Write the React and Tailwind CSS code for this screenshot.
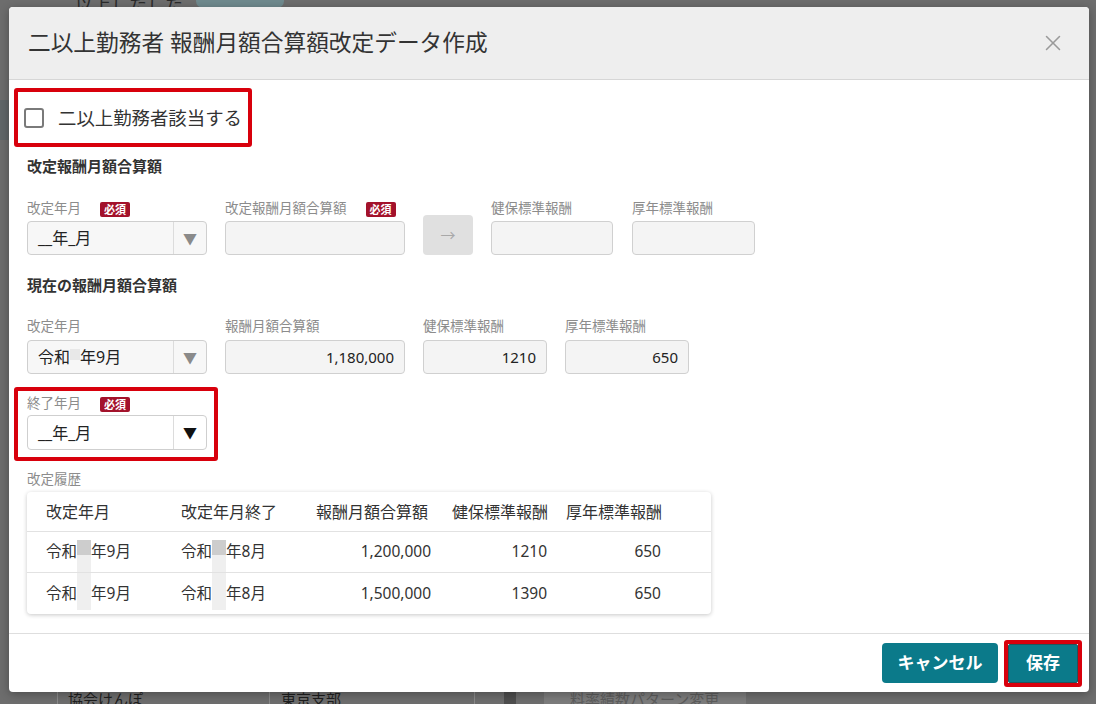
import { X } from 'lucide-react';

function Badge() {
  return (
    <span className="ml-[19px] inline-flex h-[15px] items-center rounded-[2px] bg-[#a3122b] px-[4px] text-[11px] font-bold leading-none text-white">
      必須
    </span>
  );
}

function Label({ children, required }) {
  return (
    <div className="flex h-[18px] items-center text-[13.5px] leading-none text-[#8c8c8c]">
      <span>{children}</span>
      {required && <Badge />}
    </div>
  );
}

function Select({ children, active }) {
  return (
    <div
      className={
        'flex h-[34px] w-[180px] items-center rounded-[4px] border border-[#cfcfcf] ' +
        (active ? 'h-[35px] bg-white' : 'bg-[#f7f7f7]')
      }
    >
      <div className="flex flex-1 items-center pl-[10px] text-[16px] text-[#222]">{children}</div>
      <div className="h-full w-px bg-[#dcdcdc]" />
      <div
        className={
          'flex w-[32px] justify-center text-[14px] ' + (active ? 'text-[#111]' : 'text-[#8a8a8a]')
        }
      >
        ▼
      </div>
    </div>
  );
}

function Field({ w, value }) {
  return (
    <div
      className={
        'flex h-[34px] items-center justify-end rounded-[4px] border border-[#d0d0d0] bg-[#f4f4f4] pr-[10px] text-[15px] text-[#222] ' +
        w
      }
    >
      {value}
    </div>
  );
}

const rows = [
  { from: '9', to: '8', total: '1,200,000', ken: '1210', kou: '650' },
  { from: '9', to: '8', total: '1,500,000', ken: '1390', kou: '650' },
];

function Redact({ first }) {
  if (first) {
    return (
      <span className="flex h-[32px] w-[14px] flex-col self-end">
        <span className="h-[15px] bg-[#cdcdcd]" />
        <span className="flex-1 bg-[#efefef]" />
      </span>
    );
  }
  return <span className="h-[37px] w-[14px] self-start bg-[#efefef]" />;
}

export default function App() {
  return (
    <div className="relative h-[704px] w-[1096px] overflow-hidden bg-[#6d6d6d] font-['Noto_Sans','Noto_Sans_CJK_JP',sans-serif]">
      {/* page behind the overlay */}
      <div className="absolute left-[57px] top-[-9px] text-[18px] text-[#2a2a2a]">二以上したした</div>
      <div className="absolute left-[196px] top-[-6px] h-[14px] w-[88px] rounded-full bg-[#6f8a8e]" />
      <div className="absolute left-0 top-[100px] h-[40px] w-[9px] bg-[#5f6668]" />
      <div className="absolute bottom-0 left-[57px] flex h-[12px] w-[690px] items-end text-[15px] leading-[15px] text-[#1e1e1e]">
        <div className="h-full w-[212px] border-l border-[#8a8a8a] pl-[10px]">協会けんぽ</div>
        <div className="h-full w-[206px] border-l border-r border-[#8a8a8a] pl-[11px]">東京支部</div>
        <div className="ml-[29px] h-full w-[12px] bg-[#4e4e4e]" />
        <div className="ml-[28px] h-full w-[202px] bg-[#7c7c7c] pl-[26px] text-[#5c5c5c]">料率績数パターン変更</div>
      </div>

      {/* modal */}
      <div className="absolute left-[9px] top-[7px] flex h-[685px] w-[1080px] flex-col rounded-[4px] bg-white shadow-[0_2px_10px_rgba(0,0,0,0.3)]">
        <div className="flex h-[73px] items-center justify-between rounded-t-[4px] border-b border-[#d6d6d6] bg-[#eeeeee] pl-[19px] pr-[23px]">
          <h1 className="text-[22.7px] text-[#333]">二以上勤務者 報酬月額合算額改定データ作成</h1>
          <X size={26} strokeWidth={1.4} className="text-[#9a9a9a]" />
        </div>

        <div className="flex-1 px-[18px]">
          <div className="-ml-[13px] mt-[8px] flex h-[59px] w-[238px] items-center rounded-[3px] border-4 border-[#d8000c] pl-[6px]">
            <span className="h-[20px] w-[20px] rounded-[3px] border-2 border-[#7a7a7a]" />
            <span className="ml-[14px] text-[18.4px] text-[#333]">二以上勤務者該当する</span>
          </div>

          <div className="mt-[8px] h-[22px] text-[15px] font-bold leading-[22px] text-[#333]">改定報酬月額合算額</div>

          <div className="mt-[23px] flex items-end gap-[18px]">
            <div>
              <Label required>改定年月</Label>
              <div className="mt-[3px]">
                <Select>__年_月</Select>
              </div>
            </div>
            <div>
              <Label required>改定報酬月額合算額</Label>
              <div className="mt-[3px]">
                <Field w="w-[180px]" value="" />
              </div>
            </div>
            <div className="flex h-[40px] w-[50px] items-center justify-center rounded-[4px] bg-[#e0e0e0] text-[15px] text-[#a8a8a8]">
              →
            </div>
            <div>
              <Label>健保標準報酬</Label>
              <div className="mt-[3px]">
                <Field w="w-[122px]" value="" />
              </div>
            </div>
            <div className="ml-[1px]">
              <Label>厚年標準報酬</Label>
              <div className="mt-[3px]">
                <Field w="w-[123px]" value="" />
              </div>
            </div>
          </div>

          <div className="mt-[19px] h-[22px] text-[15px] font-bold leading-[22px] text-[#333]">現在の報酬月額合算額</div>

          <div className="mt-[22px] flex gap-[18px]">
            <div>
              <Label>改定年月</Label>
              <div className="mt-[4px]">
                <Select>
                  <span>令和</span>
                  <span className="mb-[6px] h-[11px] w-[10px] bg-[#e8e8e8]" />
                  <span>年9月</span>
                </Select>
              </div>
            </div>
            <div>
              <Label>報酬月額合算額</Label>
              <div className="mt-[4px]">
                <Field w="w-[180px]" value="1,180,000" />
              </div>
            </div>
            <div>
              <Label>健保標準報酬</Label>
              <div className="mt-[4px]">
                <Field w="w-[124px]" value="1210" />
              </div>
            </div>
            <div>
              <Label>厚年標準報酬</Label>
              <div className="mt-[4px]">
                <Field w="w-[124px]" value="650" />
              </div>
            </div>
          </div>

          <div className="-ml-[13px] mt-[13px] h-[74px] w-[204px] rounded-[3px] border-4 border-[#d8000c] pl-[9px] pt-[4px]">
            <Label required>終了年月</Label>
            <div className="mt-[2px]">
              <Select active>__年_月</Select>
            </div>
          </div>

          <div className="mt-[10px]">
            <Label>改定履歴</Label>
          </div>

          <div className="mt-[3px] w-[684px] rounded-[4px] bg-white text-[15.5px] text-[#333] shadow-[0_1px_4px_rgba(0,0,0,0.22)]">
            <div className="flex h-[40px] items-center border-b border-[#e2e2e2] pl-[19px] text-[16px]">
              <div className="w-[135px]">改定年月</div>
              <div className="w-[135px]">改定年月終了</div>
              <div className="w-[115px]">報酬月額合算額</div>
              <div className="ml-[21px] w-[95px] whitespace-nowrap">健保標準報酬</div>
              <div className="ml-[19px] w-[95px] whitespace-nowrap">厚年標準報酬</div>
            </div>
            {rows.map((r, i) => (
              <div
                key={i}
                className={
                  'flex h-[41px] items-center pl-[19px] ' + (i === 0 ? 'border-b border-[#e2e2e2]' : '')
                }
              >
                <div className="flex h-full w-[135px] items-center">
                  <span>令和</span>
                  <Redact first={i === 0} />
                  <span>年{r.from}月</span>
                </div>
                <div className="flex h-full w-[135px] items-center">
                  <span>令和</span>
                  <Redact first={i === 0} />
                  <span>年{r.to}月</span>
                </div>
                <div className="w-[115px] text-right">{r.total}</div>
                <div className="ml-[21px] w-[95px] text-right">{r.ken}</div>
                <div className="ml-[19px] w-[95px] text-right">{r.kou}</div>
              </div>
            ))}
          </div>
        </div>

        <div className="flex h-[59px] items-center justify-end border-t border-[#dedede] pr-[7px]">
          <button className="h-[40px] w-[116px] rounded-[4px] bg-[#0b7a8a] text-[17px] font-bold text-white">
            キャンセル
          </button>
          <div className="ml-[6px] flex h-[47px] w-[78px] items-center justify-center rounded-[3px] border-4 border-[#d8000c]">
            <button className="h-full w-full rounded-[2px] border border-[#22545c] bg-[#0b7a8a] text-[17px] font-bold text-white">
              保存
            </button>
          </div>
        </div>
      </div>
    </div>
  );
}
